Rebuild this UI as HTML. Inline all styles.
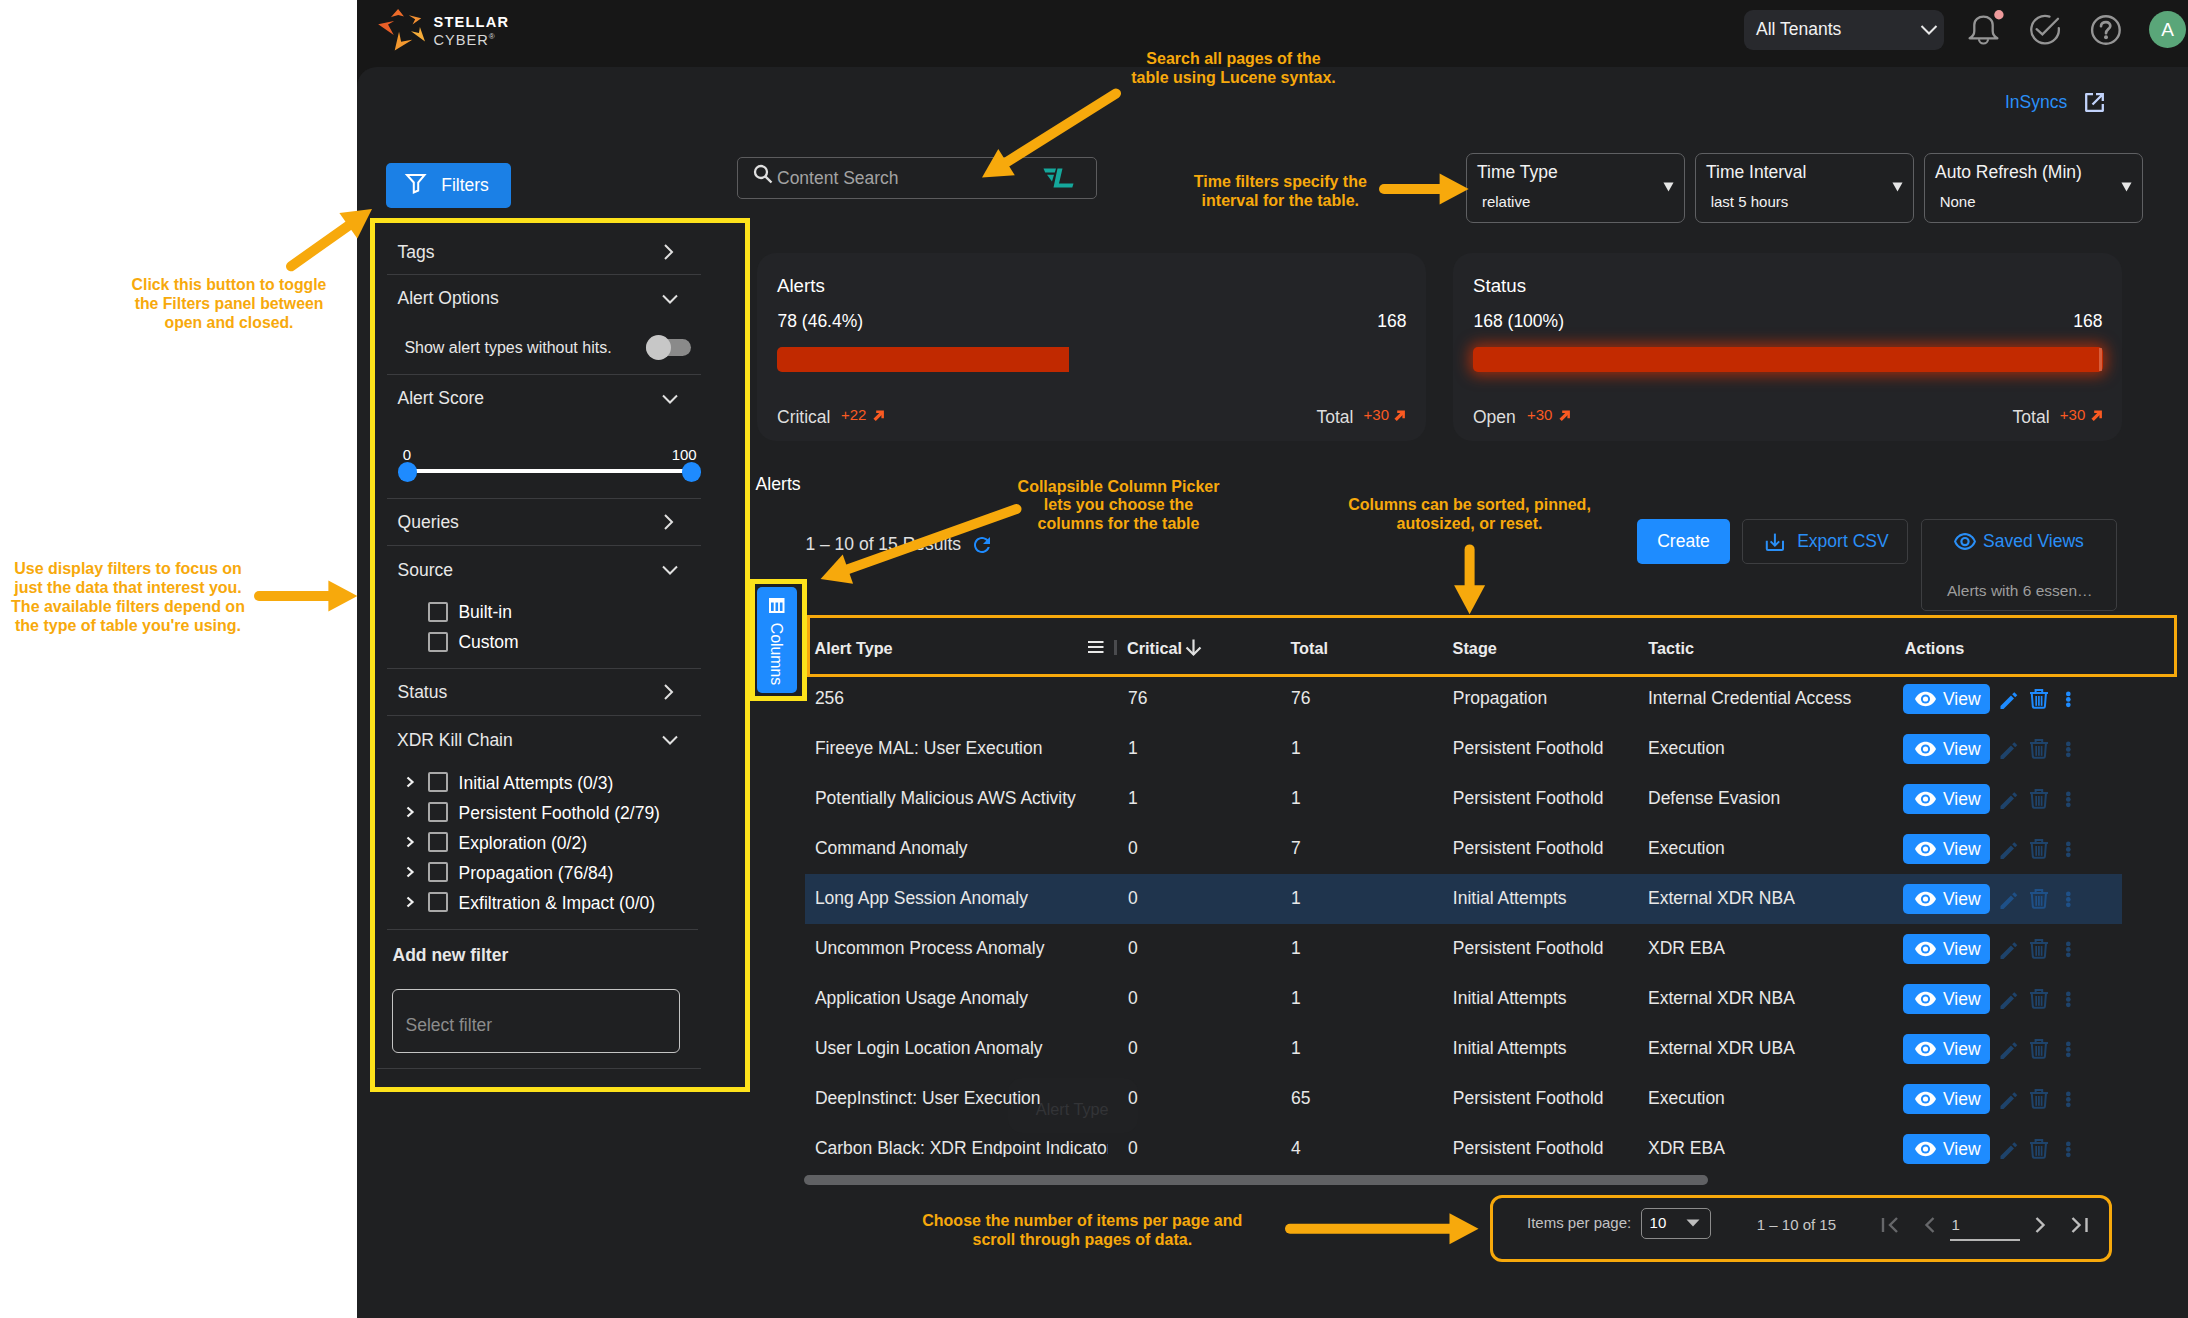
<!DOCTYPE html>
<html><head><meta charset="utf-8"><style>
html,body{margin:0;padding:0;}
body{width:2188px;height:1318px;position:relative;overflow:hidden;background:#fff;font-family:"Liberation Sans",sans-serif;}
.t{position:absolute;white-space:nowrap;}
.r{position:absolute;}
.s{position:absolute;overflow:visible;}
</style></head><body>
<div class="r" style="left:0px;top:0px;width:357px;height:1318px;background:#ffffff;"></div>
<div class="r" style="left:357px;top:0px;width:1831px;height:67px;background:#171717;"></div>
<div class="r" style="left:357px;top:67px;width:1831px;height:1251px;background:#171717;"></div>
<div class="r" style="left:357px;top:67px;width:1831px;height:1251px;background:#1f2022;border-top-left-radius:20px;"></div>
<svg class="s" style="left:357px;top:0px;" width="80" height="60" viewBox="0 0 80 60"><polygon points="41.09,8.98 33.88,17.14 35.07,16.79 41.28,14.94 46.06,16.15 46.97,16.38" fill="#ee6c2a"/><polygon points="64.23,18.28 51.90,15.24 52.90,15.88 58.16,19.23 55.93,23.69 55.51,24.54" fill="#f39032"/><polygon points="68.02,41.42 62.90,27.00 62.75,27.94 61.95,32.88 55.26,31.45 53.99,31.18" fill="#f6ad3a"/><polygon points="37.68,50.52 42.04,31.75 42.37,33.35 44.12,41.80 53.53,40.05 55.32,39.71" fill="#f3982f"/><polygon points="21.17,24.35 36.92,21.12 35.98,21.67 31.04,24.54 35.82,33.30 36.73,34.97" fill="#e95f28"/></svg>
<div class="t" style="top:14.84px;font-size:14.6px;line-height:14.6px;color:#ffffff;font-weight:700;letter-spacing:1.2px;left:433.50px;">STELLAR</div>
<div class="t" style="top:32.84px;font-size:14.6px;line-height:14.6px;color:#d8d8d8;letter-spacing:1.0px;left:433.50px;">CYBER<span style="font-size:8px;position:relative;top:-6px;margin-left:0px">®</span></div>
<div class="r" style="left:1744px;top:10px;width:200px;height:40px;background:#28292d;border-radius:9px;"></div>
<div class="t" style="top:21.39px;font-size:17.5px;line-height:17.5px;color:#f2f2f2;left:1756.00px;">All Tenants</div>
<svg class="s" style="left:1918px;top:22px;" width="22" height="16" viewBox="0 0 22 16"><polyline points="3.5,4 11,11.5 18.5,4" fill="none" stroke="#e8e8e8" stroke-width="2"/></svg>
<svg class="s" style="left:1966px;top:12px;" width="36" height="36" viewBox="0 0 36 36"><path d="M3.6 26.3 C6.6 24.6 8.3 22.5 8.3 19 V13 C8.3 7.8 12.4 4.7 17.5 4.7 C22.6 4.7 26.7 7.8 26.7 13 V19 C26.7 22.5 28.4 24.6 31.4 26.3 Z" fill="none" stroke="#959595" stroke-width="2.3" stroke-linejoin="round"/><path d="M13 27.2 A4.5 4.3 0 0 0 22 27.2" fill="none" stroke="#959595" stroke-width="2.2"/></svg>
<svg class="s" style="left:1992px;top:8px;" width="14" height="14" viewBox="0 0 14 14"><circle cx="6.9" cy="6.7" r="4.7" fill="#ee9a9b"/></svg>
<svg class="s" style="left:2028px;top:13px;" width="34" height="34" viewBox="0 0 34 34"><path d="M21.5 3.6 A13.8 13.8 0 1 0 30.8 15.2" fill="none" stroke="#959595" stroke-width="2.3" stroke-linecap="round"/><polyline points="8.6,16.2 14.4,21.4 30,5.8" fill="none" stroke="#959595" stroke-width="2.3" stroke-linecap="round"/></svg>
<svg class="s" style="left:2089px;top:13px;" width="34" height="34" viewBox="0 0 34 34"><circle cx="16.9" cy="17" r="13.8" fill="none" stroke="#959595" stroke-width="2.4"/><path d="M12 13.2 C12 10.6 14.2 9.1 17 9.1 C19.6 9.1 21.3 10.8 21.3 13 C21.3 15.8 17 16.6 17 20.2" fill="none" stroke="#959595" stroke-width="2.7" stroke-linecap="round"/><circle cx="17" cy="24.2" r="2" fill="#959595"/></svg>
<div class="r" style="left:2149px;top:11px;width:37px;height:37px;background:#5aa679;border-radius:19px;"></div>
<div class="t" style="top:19.72px;font-size:19px;line-height:19px;color:#ffffff;left:1667.50px;width:1000px;text-align:center;">A</div>
<div class="t" style="top:94.39px;font-size:17.5px;line-height:17.5px;color:#2a8ff7;left:2005.00px;">InSyncs</div>
<svg class="s" style="left:2083px;top:91px;" width="23" height="23" viewBox="0 0 23 23"><path d="M10 3.2 H3.2 V19.8 H19.8 V13" fill="none" stroke="#c2d3fb" stroke-width="2.3" stroke-linejoin="round"/><path d="M9.5 13.5 L19 4 M13 3.2 H19.8 V10" fill="none" stroke="#c2d3fb" stroke-width="2.3"/></svg>
<div class="r" style="left:386px;top:163px;width:125px;height:45px;background:#1b80e6;border-radius:5px;"></div>
<svg class="s" style="left:404px;top:172px;" width="24" height="23" viewBox="0 0 24 23"><path d="M3 3 H20.5 L14.2 10.5 V18.5 L9.8 20.5 V10.5 Z" fill="none" stroke="#fff" stroke-width="2" stroke-linejoin="miter"/></svg>
<div class="t" style="top:177.29px;font-size:17.5px;line-height:17.5px;color:#ffffff;left:441.20px;">Filters</div>
<div class="r" style="left:737px;top:157px;width:360px;height:42px;border:1px solid #5c5c5e;box-sizing:border-box;border-radius:5px;"></div>
<svg class="s" style="left:751px;top:163px;" width="24" height="24" viewBox="0 0 24 24"><circle cx="10" cy="9" r="6" fill="none" stroke="#e0e0e0" stroke-width="2.3"/><line x1="14.3" y1="13.3" x2="20.5" y2="19.5" stroke="#e0e0e0" stroke-width="2.4"/></svg>
<div class="t" style="top:169.99px;font-size:17.5px;line-height:17.5px;color:#a3a3a3;left:777.00px;">Content Search</div>
<svg class="s" style="left:1042px;top:167px;" width="36" height="22" viewBox="0 0 36 22"><polygon points="1.5,1.5 14,1.5 12.8,5.5 3.2,5.5" fill="#15a89c"/><polygon points="5,7.8 12,7.8 10,14.5 " fill="#15a89c"/><polygon points="15.5,1.5 20.5,1.5 17,16.5 31.5,16.5 30.3,20.5 11.5,20.5" fill="#15a89c"/></svg>
<div class="r" style="left:1466px;top:153px;width:219px;height:70px;border:1.5px solid #5f6063;box-sizing:border-box;border-radius:7px;"></div>
<div class="t" style="top:164.09px;font-size:17.5px;line-height:17.5px;color:#f2f2f2;left:1477.00px;">Time Type</div>
<div class="t" style="top:193.80px;font-size:15px;line-height:15px;color:#f2f2f2;left:1481.90px;">relative</div>
<svg class="s" style="left:1663px;top:182px;" width="12" height="10" viewBox="0 0 12 10"><polygon points="0.5,0.5 10.5,0.5 5.5,9.5" fill="#e6e6e6"/></svg>
<div class="r" style="left:1695px;top:153px;width:219px;height:70px;border:1.5px solid #5f6063;box-sizing:border-box;border-radius:7px;"></div>
<div class="t" style="top:164.09px;font-size:17.5px;line-height:17.5px;color:#f2f2f2;left:1706.00px;">Time Interval</div>
<div class="t" style="top:193.80px;font-size:15px;line-height:15px;color:#f2f2f2;left:1710.70px;">last 5 hours</div>
<svg class="s" style="left:1892px;top:182px;" width="12" height="10" viewBox="0 0 12 10"><polygon points="0.5,0.5 10.5,0.5 5.5,9.5" fill="#e6e6e6"/></svg>
<div class="r" style="left:1924px;top:153px;width:219px;height:70px;border:1.5px solid #5f6063;box-sizing:border-box;border-radius:7px;"></div>
<div class="t" style="top:164.09px;font-size:17.5px;line-height:17.5px;color:#f2f2f2;left:1935.00px;">Auto Refresh (Min)</div>
<div class="t" style="top:193.80px;font-size:15px;line-height:15px;color:#f2f2f2;left:1939.70px;">None</div>
<svg class="s" style="left:2121px;top:182px;" width="12" height="10" viewBox="0 0 12 10"><polygon points="0.5,0.5 10.5,0.5 5.5,9.5" fill="#e6e6e6"/></svg>
<div class="r" style="left:757px;top:253px;width:669px;height:188px;background:#232427;border-radius:19px;"></div>
<div class="t" style="top:276.97px;font-size:18.7px;line-height:18.7px;color:#ffffff;left:777.00px;">Alerts</div>
<div class="t" style="top:312.99px;font-size:17.5px;line-height:17.5px;color:#ffffff;left:777.50px;">78 (46.4%)</div>
<div class="t" style="top:312.99px;font-size:17.5px;line-height:17.5px;color:#ffffff;right:781.50px;">168</div>
<div class="r" style="left:777px;top:347px;width:292px;height:25px;background:#c12900;border-radius:5px 0 0 5px;"></div>
<div class="t" style="top:408.99px;font-size:17.5px;line-height:17.5px;color:#dedede;left:777.00px;">Critical</div>
<div class="t" style="top:407.30px;font-size:15px;line-height:15px;color:#fa5a22;left:840.90px;">+22</div>
<svg class="s" style="left:872.6999999999999px;top:409.6px;" width="12" height="12" viewBox="0 0 12 12"><polygon points="3.2,0.6 10.9,0.6 10.9,8.3 8.4,8.3 8.4,3.1 3.2,3.1" fill="#fa5a22"/><line x1="1.6" y1="9.9" x2="9.4" y2="2.1" stroke="#fa5a22" stroke-width="3.2"/></svg>
<div class="t" style="top:408.99px;font-size:17.5px;line-height:17.5px;color:#dedede;left:1316.50px;">Total</div>
<div class="t" style="top:407.30px;font-size:15px;line-height:15px;color:#fa5a22;left:1363.60px;">+30</div>
<svg class="s" style="left:1394.3px;top:409.6px;" width="12" height="12" viewBox="0 0 12 12"><polygon points="3.2,0.6 10.9,0.6 10.9,8.3 8.4,8.3 8.4,3.1 3.2,3.1" fill="#fa5a22"/><line x1="1.6" y1="9.9" x2="9.4" y2="2.1" stroke="#fa5a22" stroke-width="3.2"/></svg>
<div class="r" style="left:1453px;top:253px;width:669px;height:188px;background:#232427;border-radius:19px;"></div>
<div class="t" style="top:276.97px;font-size:18.7px;line-height:18.7px;color:#ffffff;left:1473.00px;">Status</div>
<div class="t" style="top:312.99px;font-size:17.5px;line-height:17.5px;color:#ffffff;left:1473.50px;">168 (100%)</div>
<div class="t" style="top:312.99px;font-size:17.5px;line-height:17.5px;color:#ffffff;right:85.50px;">168</div>
<div class="r" style="left:1473px;top:347px;width:630px;height:25px;background:#c32a00;border-radius:5px;box-shadow:0 0 14px 4px rgba(225,50,0,0.6);"></div>
<div class="r" style="left:2099px;top:348px;width:3px;height:23px;background:rgba(255,190,170,0.35);"></div>
<div class="t" style="top:408.99px;font-size:17.5px;line-height:17.5px;color:#dedede;left:1473.00px;">Open</div>
<div class="t" style="top:407.30px;font-size:15px;line-height:15px;color:#fa5a22;left:1526.90px;">+30</div>
<svg class="s" style="left:1558.8999999999999px;top:409.6px;" width="12" height="12" viewBox="0 0 12 12"><polygon points="3.2,0.6 10.9,0.6 10.9,8.3 8.4,8.3 8.4,3.1 3.2,3.1" fill="#fa5a22"/><line x1="1.6" y1="9.9" x2="9.4" y2="2.1" stroke="#fa5a22" stroke-width="3.2"/></svg>
<div class="t" style="top:408.99px;font-size:17.5px;line-height:17.5px;color:#dedede;left:2012.60px;">Total</div>
<div class="t" style="top:407.30px;font-size:15px;line-height:15px;color:#fa5a22;left:2059.80px;">+30</div>
<svg class="s" style="left:2091.3px;top:409.6px;" width="12" height="12" viewBox="0 0 12 12"><polygon points="3.2,0.6 10.9,0.6 10.9,8.3 8.4,8.3 8.4,3.1 3.2,3.1" fill="#fa5a22"/><line x1="1.6" y1="9.9" x2="9.4" y2="2.1" stroke="#fa5a22" stroke-width="3.2"/></svg>
<div class="t" style="top:243.79px;font-size:17.5px;line-height:17.5px;color:#e8e8e8;left:397.50px;">Tags</div>
<svg class="s" style="left:660px;top:242.5px;" width="18" height="18" viewBox="0 0 18 18"><polyline points="5,2 12,9 5,16" fill="none" stroke="#e0e0e0" stroke-width="2"/></svg>
<div class="r" style="left:387px;top:274px;width:314px;height:1px;background:#3b3c3f;"></div>
<div class="t" style="top:290.39px;font-size:17.5px;line-height:17.5px;color:#e8e8e8;left:397.50px;">Alert Options</div>
<svg class="s" style="left:660px;top:289.5px;" width="20" height="18" viewBox="0 0 20 18"><polyline points="3,5.5 10,12.5 17,5.5" fill="none" stroke="#e0e0e0" stroke-width="2"/></svg>
<div class="t" style="top:340.06px;font-size:16px;line-height:16px;color:#e8e8e8;left:404.40px;">Show alert types without hits.</div>
<div class="r" style="left:646px;top:339px;width:45px;height:17px;background:#8a8a8a;border-radius:9px;"></div>
<div class="r" style="left:646px;top:335px;width:25px;height:25px;background:#c7c7c7;border-radius:13px;"></div>
<div class="r" style="left:387px;top:374px;width:314px;height:1px;background:#3b3c3f;"></div>
<div class="t" style="top:389.99px;font-size:17.5px;line-height:17.5px;color:#e8e8e8;left:397.50px;">Alert Score</div>
<svg class="s" style="left:660px;top:389.5px;" width="20" height="18" viewBox="0 0 20 18"><polyline points="3,5.5 10,12.5 17,5.5" fill="none" stroke="#e0e0e0" stroke-width="2"/></svg>
<div class="t" style="top:447.30px;font-size:15px;line-height:15px;color:#ffffff;left:402.80px;">0</div>
<div class="t" style="top:447.30px;font-size:15px;line-height:15px;color:#ffffff;right:1491.30px;">100</div>
<div class="r" style="left:407px;top:469px;width:284px;height:4px;background:#ffffff;"></div>
<div class="r" style="left:397.5px;top:462px;width:19.5px;height:19.5px;background:#1e8bff;border-radius:10px;"></div>
<div class="r" style="left:681.5px;top:462px;width:19.5px;height:19.5px;background:#1e8bff;border-radius:10px;"></div>
<div class="r" style="left:387px;top:498px;width:314px;height:1px;background:#3b3c3f;"></div>
<div class="t" style="top:514.39px;font-size:17.5px;line-height:17.5px;color:#e8e8e8;left:397.60px;">Queries</div>
<svg class="s" style="left:660px;top:512.5px;" width="18" height="18" viewBox="0 0 18 18"><polyline points="5,2 12,9 5,16" fill="none" stroke="#e0e0e0" stroke-width="2"/></svg>
<div class="r" style="left:387px;top:545px;width:314px;height:1px;background:#3b3c3f;"></div>
<div class="t" style="top:561.79px;font-size:17.5px;line-height:17.5px;color:#e8e8e8;left:397.60px;">Source</div>
<svg class="s" style="left:660px;top:560.5px;" width="20" height="18" viewBox="0 0 20 18"><polyline points="3,5.5 10,12.5 17,5.5" fill="none" stroke="#e0e0e0" stroke-width="2"/></svg>
<div class="r" style="left:428px;top:602px;width:20px;height:20px;border:2px solid #a9a9a9;box-sizing:border-box;border-radius:2px;"></div>
<div class="t" style="top:604.39px;font-size:17.5px;line-height:17.5px;color:#ffffff;left:458.40px;">Built-in</div>
<div class="r" style="left:428px;top:632px;width:20px;height:20px;border:2px solid #a9a9a9;box-sizing:border-box;border-radius:2px;"></div>
<div class="t" style="top:633.99px;font-size:17.5px;line-height:17.5px;color:#ffffff;left:458.40px;">Custom</div>
<div class="r" style="left:387px;top:668px;width:314px;height:1px;background:#3b3c3f;"></div>
<div class="t" style="top:684.09px;font-size:17.5px;line-height:17.5px;color:#e8e8e8;left:397.60px;">Status</div>
<svg class="s" style="left:660px;top:682.5px;" width="18" height="18" viewBox="0 0 18 18"><polyline points="5,2 12,9 5,16" fill="none" stroke="#e0e0e0" stroke-width="2"/></svg>
<div class="r" style="left:387px;top:715px;width:314px;height:1px;background:#3b3c3f;"></div>
<div class="t" style="top:731.69px;font-size:17.5px;line-height:17.5px;color:#e8e8e8;left:397.00px;">XDR Kill Chain</div>
<svg class="s" style="left:660px;top:730.5px;" width="20" height="18" viewBox="0 0 20 18"><polyline points="3,5.5 10,12.5 17,5.5" fill="none" stroke="#e0e0e0" stroke-width="2"/></svg>
<svg class="s" style="left:403px;top:775px;" width="14" height="14" viewBox="0 0 14 14"><polyline points="4.5,2.5 9.5,7 4.5,11.5" fill="none" stroke="#f0f0f0" stroke-width="2.2"/></svg>
<div class="r" style="left:428px;top:772px;width:20px;height:20px;border:2px solid #a9a9a9;box-sizing:border-box;border-radius:2px;"></div>
<div class="t" style="top:774.79px;font-size:17.5px;line-height:17.5px;color:#ffffff;left:458.60px;">Initial Attempts (0/3)</div>
<svg class="s" style="left:403px;top:805px;" width="14" height="14" viewBox="0 0 14 14"><polyline points="4.5,2.5 9.5,7 4.5,11.5" fill="none" stroke="#f0f0f0" stroke-width="2.2"/></svg>
<div class="r" style="left:428px;top:802px;width:20px;height:20px;border:2px solid #a9a9a9;box-sizing:border-box;border-radius:2px;"></div>
<div class="t" style="top:804.79px;font-size:17.5px;line-height:17.5px;color:#ffffff;left:458.60px;">Persistent Foothold (2/79)</div>
<svg class="s" style="left:403px;top:835px;" width="14" height="14" viewBox="0 0 14 14"><polyline points="4.5,2.5 9.5,7 4.5,11.5" fill="none" stroke="#f0f0f0" stroke-width="2.2"/></svg>
<div class="r" style="left:428px;top:832px;width:20px;height:20px;border:2px solid #a9a9a9;box-sizing:border-box;border-radius:2px;"></div>
<div class="t" style="top:834.79px;font-size:17.5px;line-height:17.5px;color:#ffffff;left:458.60px;">Exploration (0/2)</div>
<svg class="s" style="left:403px;top:865px;" width="14" height="14" viewBox="0 0 14 14"><polyline points="4.5,2.5 9.5,7 4.5,11.5" fill="none" stroke="#f0f0f0" stroke-width="2.2"/></svg>
<div class="r" style="left:428px;top:862px;width:20px;height:20px;border:2px solid #a9a9a9;box-sizing:border-box;border-radius:2px;"></div>
<div class="t" style="top:864.79px;font-size:17.5px;line-height:17.5px;color:#ffffff;left:458.60px;">Propagation (76/84)</div>
<svg class="s" style="left:403px;top:895px;" width="14" height="14" viewBox="0 0 14 14"><polyline points="4.5,2.5 9.5,7 4.5,11.5" fill="none" stroke="#f0f0f0" stroke-width="2.2"/></svg>
<div class="r" style="left:428px;top:892px;width:20px;height:20px;border:2px solid #a9a9a9;box-sizing:border-box;border-radius:2px;"></div>
<div class="t" style="top:894.79px;font-size:17.5px;line-height:17.5px;color:#ffffff;left:458.60px;">Exfiltration &amp; Impact (0/0)</div>
<div class="r" style="left:387px;top:929px;width:311px;height:1px;background:#3b3c3f;"></div>
<div class="t" style="top:947.19px;font-size:17.5px;line-height:17.5px;color:#e8e8e8;font-weight:700;left:392.50px;">Add new filter</div>
<div class="r" style="left:392px;top:989px;width:288px;height:64px;border:1px solid #c4c4c4;box-sizing:border-box;border-radius:6px;"></div>
<div class="t" style="top:1016.99px;font-size:17.5px;line-height:17.5px;color:#8c8c8c;left:405.50px;">Select filter</div>
<div class="r" style="left:377px;top:1068px;width:324px;height:1px;background:#3b3c3f;"></div>
<div class="r" style="left:370px;top:218px;width:380px;height:874px;border:5px solid #fde21b;box-sizing:border-box;"></div>
<div class="r" style="left:750px;top:579px;width:57px;height:122px;border:5px solid #fde21b;box-sizing:border-box;"></div>
<div class="r" style="left:757px;top:587px;width:40px;height:106px;background:#1e8bff;border-radius:5px;"></div>
<svg class="s" style="left:768px;top:597px;" width="18" height="17" viewBox="0 0 18 17"><rect x="2" y="2" width="13.5" height="13" fill="none" stroke="#fff" stroke-width="2"/><rect x="2" y="2" width="13.5" height="3.5" fill="#fff"/><line x1="6.6" y1="4" x2="6.6" y2="15" stroke="#fff" stroke-width="1.8"/><line x1="11" y1="4" x2="11" y2="15" stroke="#fff" stroke-width="1.8"/></svg>
<div class="t" style="left:744px;top:644px;width:64px;height:20px;font-size:15.8px;line-height:20px;color:#fff;text-align:center;transform:rotate(90deg);">Columns</div>
<div class="t" style="top:476.02px;font-size:17.7px;line-height:17.7px;color:#ffffff;left:755.50px;">Alerts</div>
<div class="t" style="top:536.19px;font-size:17.5px;line-height:17.5px;color:#e0e0e0;left:805.40px;">1 – 10 of 15 Results</div>
<svg class="s" style="left:970px;top:532.6px;" width="24" height="24" viewBox="0 0 24 24"><path d="M17.65 6.35C16.2 4.9 14.21 4 12 4c-4.42 0-7.99 3.58-7.99 8s3.57 8 7.99 8c3.73 0 6.84-2.55 7.73-6h-2.08c-.82 2.33-3.04 4-5.65 4-3.310 0-6-2.69-6-6s2.69-6 6-6c1.66 0 3.14.69 4.220 1.780L13 11h7V4l-2.35 2.35z" fill="#1e8bff"/></svg>
<div class="r" style="left:1637px;top:519px;width:93px;height:45px;background:#1e8cff;border-radius:5px;"></div>
<div class="t" style="top:533.19px;font-size:17.5px;line-height:17.5px;color:#ffffff;left:1183.50px;width:1000px;text-align:center;">Create</div>
<div class="r" style="left:1742px;top:519px;width:166px;height:45px;border:1px solid #3d3e41;box-sizing:border-box;border-radius:5px;"></div>
<svg class="s" style="left:1764px;top:532px;" width="22" height="22" viewBox="0 0 22 22"><path d="M2.8 8.8 V17 Q2.8 18.1 3.9 18.1 H17.9 Q19 18.1 19 17 V8.8" fill="none" stroke="#2a8ff7" stroke-width="2"/><line x1="10.9" y1="1.6" x2="10.9" y2="13" stroke="#2a8ff7" stroke-width="2"/><polyline points="6.6,9.4 10.9,13.6 15.2,9.4" fill="none" stroke="#2a8ff7" stroke-width="2"/></svg>
<div class="t" style="top:533.19px;font-size:17.5px;line-height:17.5px;color:#2a8ff7;left:1797.20px;">Export CSV</div>
<div class="r" style="left:1921px;top:519px;width:196px;height:92px;border:1px solid #3d3e41;box-sizing:border-box;border-radius:5px;"></div>
<svg class="s" style="left:1953px;top:528.3px;" width="24" height="24" viewBox="0 0 24 24"><g transform="scale(1,1.13)"><path d="M12 6.5c3.79 0 7.170 2.13 8.82 5.5-1.65 3.37-5.02 5.5-8.82 5.5S4.830 15.37 3.180 12C4.830 8.630 8.210 6.5 12 6.5m0-2C7 4.5 2.730 7.610 1 12c1.73 4.39 6 7.5 11 7.5s9.27-3.11 11-7.5c-1.73-4.39-6-7.5-11-7.5z" fill="#2a8ff7"/></g><circle cx="12" cy="13.6" r="3.6" fill="none" stroke="#2a8ff7" stroke-width="2.2"/></svg>
<div class="t" style="top:533.19px;font-size:17.5px;line-height:17.5px;color:#2a8ff7;left:1983.00px;">Saved Views</div>
<div class="t" style="top:582.58px;font-size:15.5px;line-height:15.5px;color:#9d9d9d;left:1947.00px;">Alerts with 6 essen…</div>
<div class="r" style="left:807px;top:615px;width:1370px;height:62px;border:3px solid #f7a90c;box-sizing:border-box;"></div>
<div class="t" style="top:640.14px;font-size:16.25px;line-height:16.25px;color:#ececec;font-weight:700;left:814.40px;">Alert Type</div>
<svg class="s" style="left:1086px;top:638px;" width="20" height="18" viewBox="0 0 20 18"><line x1="2" y1="4" x2="17.5" y2="4" stroke="#e8e8e8" stroke-width="2"/><line x1="2" y1="9" x2="17.5" y2="9" stroke="#e8e8e8" stroke-width="2"/><line x1="2" y1="14" x2="17.5" y2="14" stroke="#e8e8e8" stroke-width="2"/></svg>
<div class="r" style="left:1114px;top:640px;width:3px;height:15px;background:#4a4b4e;"></div>
<div class="t" style="top:640.14px;font-size:16.25px;line-height:16.25px;color:#ececec;font-weight:700;left:1126.90px;">Critical</div>
<svg class="s" style="left:1184px;top:638px;" width="20" height="19" viewBox="0 0 20 19"><line x1="9.5" y1="1.5" x2="9.5" y2="16.5" stroke="#e0e0e0" stroke-width="2.2"/><polyline points="2.5,9.5 9.5,16.5 16.5,9.5" fill="none" stroke="#e0e0e0" stroke-width="2.2"/></svg>
<div class="t" style="top:640.14px;font-size:16.25px;line-height:16.25px;color:#ececec;font-weight:700;left:1290.40px;">Total</div>
<div class="t" style="top:640.14px;font-size:16.25px;line-height:16.25px;color:#ececec;font-weight:700;left:1452.60px;">Stage</div>
<div class="t" style="top:640.14px;font-size:16.25px;line-height:16.25px;color:#ececec;font-weight:700;left:1648.20px;">Tactic</div>
<div class="t" style="top:640.14px;font-size:16.25px;line-height:16.25px;color:#ececec;font-weight:700;left:1904.70px;">Actions</div>
<div class="r" style="left:805px;top:874px;width:1317px;height:50px;background:#1f344d;"></div>
<div class="r" style="left:1008px;top:1078px;width:130px;height:55px;background:#202123;border-radius:14px;"></div>
<div class="t" style="top:1101.04px;font-size:16.25px;line-height:16.25px;color:#333437;left:1035.80px;">Alert Type</div>
<div class="t" style="top:689.69px;font-size:17.5px;line-height:17.5px;color:#e8e8e8;left:814.90px;">256</div>
<div class="t" style="top:689.69px;font-size:17.5px;line-height:17.5px;color:#e8e8e8;left:1128.00px;">76</div>
<div class="t" style="top:689.69px;font-size:17.5px;line-height:17.5px;color:#e8e8e8;left:1291.00px;">76</div>
<div class="t" style="top:689.69px;font-size:17.5px;line-height:17.5px;color:#e8e8e8;left:1452.80px;">Propagation</div>
<div class="t" style="top:689.69px;font-size:17.5px;line-height:17.5px;color:#e8e8e8;left:1648.00px;">Internal Credential Access</div>
<div class="r" style="left:1903px;top:684px;width:87px;height:30px;background:#1e8cff;border-radius:5px;"></div>
<svg class="s" style="left:1914px;top:691px;" width="24" height="16" viewBox="0 0 24 16"><path d="M1 8 C3.5 3 7.5 0.8 11.5 0.8 C15.5 0.8 19.5 3 22 8 C19.5 13 15.5 15.2 11.5 15.2 C7.5 15.2 3.5 13 1 8 Z" fill="#fff"/><circle cx="11.5" cy="8" r="4.6" fill="#1e8cff"/><circle cx="11.5" cy="8" r="2.6" fill="#fff"/></svg>
<div class="t" style="top:690.89px;font-size:17.5px;line-height:17.5px;color:#ffffff;left:1943.00px;">View</div>
<svg class="s" style="left:1999px;top:690px;" width="21" height="20" viewBox="0 0 21 20"><path d="M1.5 16 L1.5 19 L4.5 19 L15 8.5 L12 5.5 Z" fill="#1e8bff"/><path d="M13.2 4.3 L15.3 2.2 L18.3 5.2 L16.2 7.3 Z" fill="#1e8bff"/></svg>
<svg class="s" style="left:2029px;top:688px;" width="20" height="22" viewBox="0 0 20 22"><path d="M2.8 5.8 L3.8 18.5 Q4 19.8 5.3 19.8 H14.5 Q15.8 19.8 15.9 18.5 L16.9 5.8" fill="none" stroke="#1e8bff" stroke-width="2"/><line x1="1" y1="5" x2="19" y2="5" stroke="#1e8bff" stroke-width="2"/><path d="M6.6 4.5 V2 H13.2 V4.5" fill="none" stroke="#1e8bff" stroke-width="2"/><line x1="7.2" y1="8" x2="7.2" y2="17.8" stroke="#1e8bff" stroke-width="1.7"/><line x1="9.9" y1="8" x2="9.9" y2="17.8" stroke="#1e8bff" stroke-width="1.7"/><line x1="12.6" y1="8" x2="12.6" y2="17.8" stroke="#1e8bff" stroke-width="1.7"/></svg>
<svg class="s" style="left:2064px;top:690px;" width="10" height="19" viewBox="0 0 10 19"><circle cx="4.3" cy="3.9" r="2.35" fill="#1e8bff"/><circle cx="4.3" cy="9.4" r="2.35" fill="#1e8bff"/><circle cx="4.3" cy="14.8" r="2.35" fill="#1e8bff"/></svg>
<div class="t" style="top:739.69px;font-size:17.5px;line-height:17.5px;color:#e8e8e8;left:814.90px;">Fireeye MAL: User Execution</div>
<div class="t" style="top:739.69px;font-size:17.5px;line-height:17.5px;color:#e8e8e8;left:1128.00px;">1</div>
<div class="t" style="top:739.69px;font-size:17.5px;line-height:17.5px;color:#e8e8e8;left:1291.00px;">1</div>
<div class="t" style="top:739.69px;font-size:17.5px;line-height:17.5px;color:#e8e8e8;left:1452.80px;">Persistent Foothold</div>
<div class="t" style="top:739.69px;font-size:17.5px;line-height:17.5px;color:#e8e8e8;left:1648.00px;">Execution</div>
<div class="r" style="left:1903px;top:734px;width:87px;height:30px;background:#1e8cff;border-radius:5px;"></div>
<svg class="s" style="left:1914px;top:741px;" width="24" height="16" viewBox="0 0 24 16"><path d="M1 8 C3.5 3 7.5 0.8 11.5 0.8 C15.5 0.8 19.5 3 22 8 C19.5 13 15.5 15.2 11.5 15.2 C7.5 15.2 3.5 13 1 8 Z" fill="#fff"/><circle cx="11.5" cy="8" r="4.6" fill="#1e8cff"/><circle cx="11.5" cy="8" r="2.6" fill="#fff"/></svg>
<div class="t" style="top:740.89px;font-size:17.5px;line-height:17.5px;color:#ffffff;left:1943.00px;">View</div>
<svg class="s" style="left:1999px;top:740px;opacity:0.33;" width="21" height="20" viewBox="0 0 21 20"><path d="M1.5 16 L1.5 19 L4.5 19 L15 8.5 L12 5.5 Z" fill="#1e8bff"/><path d="M13.2 4.3 L15.3 2.2 L18.3 5.2 L16.2 7.3 Z" fill="#1e8bff"/></svg>
<svg class="s" style="left:2029px;top:738px;opacity:0.33;" width="20" height="22" viewBox="0 0 20 22"><path d="M2.8 5.8 L3.8 18.5 Q4 19.8 5.3 19.8 H14.5 Q15.8 19.8 15.9 18.5 L16.9 5.8" fill="none" stroke="#1e8bff" stroke-width="2"/><line x1="1" y1="5" x2="19" y2="5" stroke="#1e8bff" stroke-width="2"/><path d="M6.6 4.5 V2 H13.2 V4.5" fill="none" stroke="#1e8bff" stroke-width="2"/><line x1="7.2" y1="8" x2="7.2" y2="17.8" stroke="#1e8bff" stroke-width="1.7"/><line x1="9.9" y1="8" x2="9.9" y2="17.8" stroke="#1e8bff" stroke-width="1.7"/><line x1="12.6" y1="8" x2="12.6" y2="17.8" stroke="#1e8bff" stroke-width="1.7"/></svg>
<svg class="s" style="left:2064px;top:740px;opacity:0.33;" width="10" height="19" viewBox="0 0 10 19"><circle cx="4.3" cy="3.9" r="2.35" fill="#1e8bff"/><circle cx="4.3" cy="9.4" r="2.35" fill="#1e8bff"/><circle cx="4.3" cy="14.8" r="2.35" fill="#1e8bff"/></svg>
<div class="t" style="top:789.69px;font-size:17.5px;line-height:17.5px;color:#e8e8e8;left:814.90px;">Potentially Malicious AWS Activity</div>
<div class="t" style="top:789.69px;font-size:17.5px;line-height:17.5px;color:#e8e8e8;left:1128.00px;">1</div>
<div class="t" style="top:789.69px;font-size:17.5px;line-height:17.5px;color:#e8e8e8;left:1291.00px;">1</div>
<div class="t" style="top:789.69px;font-size:17.5px;line-height:17.5px;color:#e8e8e8;left:1452.80px;">Persistent Foothold</div>
<div class="t" style="top:789.69px;font-size:17.5px;line-height:17.5px;color:#e8e8e8;left:1648.00px;">Defense Evasion</div>
<div class="r" style="left:1903px;top:784px;width:87px;height:30px;background:#1e8cff;border-radius:5px;"></div>
<svg class="s" style="left:1914px;top:791px;" width="24" height="16" viewBox="0 0 24 16"><path d="M1 8 C3.5 3 7.5 0.8 11.5 0.8 C15.5 0.8 19.5 3 22 8 C19.5 13 15.5 15.2 11.5 15.2 C7.5 15.2 3.5 13 1 8 Z" fill="#fff"/><circle cx="11.5" cy="8" r="4.6" fill="#1e8cff"/><circle cx="11.5" cy="8" r="2.6" fill="#fff"/></svg>
<div class="t" style="top:790.89px;font-size:17.5px;line-height:17.5px;color:#ffffff;left:1943.00px;">View</div>
<svg class="s" style="left:1999px;top:790px;opacity:0.33;" width="21" height="20" viewBox="0 0 21 20"><path d="M1.5 16 L1.5 19 L4.5 19 L15 8.5 L12 5.5 Z" fill="#1e8bff"/><path d="M13.2 4.3 L15.3 2.2 L18.3 5.2 L16.2 7.3 Z" fill="#1e8bff"/></svg>
<svg class="s" style="left:2029px;top:788px;opacity:0.33;" width="20" height="22" viewBox="0 0 20 22"><path d="M2.8 5.8 L3.8 18.5 Q4 19.8 5.3 19.8 H14.5 Q15.8 19.8 15.9 18.5 L16.9 5.8" fill="none" stroke="#1e8bff" stroke-width="2"/><line x1="1" y1="5" x2="19" y2="5" stroke="#1e8bff" stroke-width="2"/><path d="M6.6 4.5 V2 H13.2 V4.5" fill="none" stroke="#1e8bff" stroke-width="2"/><line x1="7.2" y1="8" x2="7.2" y2="17.8" stroke="#1e8bff" stroke-width="1.7"/><line x1="9.9" y1="8" x2="9.9" y2="17.8" stroke="#1e8bff" stroke-width="1.7"/><line x1="12.6" y1="8" x2="12.6" y2="17.8" stroke="#1e8bff" stroke-width="1.7"/></svg>
<svg class="s" style="left:2064px;top:790px;opacity:0.33;" width="10" height="19" viewBox="0 0 10 19"><circle cx="4.3" cy="3.9" r="2.35" fill="#1e8bff"/><circle cx="4.3" cy="9.4" r="2.35" fill="#1e8bff"/><circle cx="4.3" cy="14.8" r="2.35" fill="#1e8bff"/></svg>
<div class="t" style="top:839.69px;font-size:17.5px;line-height:17.5px;color:#e8e8e8;left:814.90px;">Command Anomaly</div>
<div class="t" style="top:839.69px;font-size:17.5px;line-height:17.5px;color:#e8e8e8;left:1128.00px;">0</div>
<div class="t" style="top:839.69px;font-size:17.5px;line-height:17.5px;color:#e8e8e8;left:1291.00px;">7</div>
<div class="t" style="top:839.69px;font-size:17.5px;line-height:17.5px;color:#e8e8e8;left:1452.80px;">Persistent Foothold</div>
<div class="t" style="top:839.69px;font-size:17.5px;line-height:17.5px;color:#e8e8e8;left:1648.00px;">Execution</div>
<div class="r" style="left:1903px;top:834px;width:87px;height:30px;background:#1e8cff;border-radius:5px;"></div>
<svg class="s" style="left:1914px;top:841px;" width="24" height="16" viewBox="0 0 24 16"><path d="M1 8 C3.5 3 7.5 0.8 11.5 0.8 C15.5 0.8 19.5 3 22 8 C19.5 13 15.5 15.2 11.5 15.2 C7.5 15.2 3.5 13 1 8 Z" fill="#fff"/><circle cx="11.5" cy="8" r="4.6" fill="#1e8cff"/><circle cx="11.5" cy="8" r="2.6" fill="#fff"/></svg>
<div class="t" style="top:840.89px;font-size:17.5px;line-height:17.5px;color:#ffffff;left:1943.00px;">View</div>
<svg class="s" style="left:1999px;top:840px;opacity:0.33;" width="21" height="20" viewBox="0 0 21 20"><path d="M1.5 16 L1.5 19 L4.5 19 L15 8.5 L12 5.5 Z" fill="#1e8bff"/><path d="M13.2 4.3 L15.3 2.2 L18.3 5.2 L16.2 7.3 Z" fill="#1e8bff"/></svg>
<svg class="s" style="left:2029px;top:838px;opacity:0.33;" width="20" height="22" viewBox="0 0 20 22"><path d="M2.8 5.8 L3.8 18.5 Q4 19.8 5.3 19.8 H14.5 Q15.8 19.8 15.9 18.5 L16.9 5.8" fill="none" stroke="#1e8bff" stroke-width="2"/><line x1="1" y1="5" x2="19" y2="5" stroke="#1e8bff" stroke-width="2"/><path d="M6.6 4.5 V2 H13.2 V4.5" fill="none" stroke="#1e8bff" stroke-width="2"/><line x1="7.2" y1="8" x2="7.2" y2="17.8" stroke="#1e8bff" stroke-width="1.7"/><line x1="9.9" y1="8" x2="9.9" y2="17.8" stroke="#1e8bff" stroke-width="1.7"/><line x1="12.6" y1="8" x2="12.6" y2="17.8" stroke="#1e8bff" stroke-width="1.7"/></svg>
<svg class="s" style="left:2064px;top:840px;opacity:0.33;" width="10" height="19" viewBox="0 0 10 19"><circle cx="4.3" cy="3.9" r="2.35" fill="#1e8bff"/><circle cx="4.3" cy="9.4" r="2.35" fill="#1e8bff"/><circle cx="4.3" cy="14.8" r="2.35" fill="#1e8bff"/></svg>
<div class="t" style="top:889.69px;font-size:17.5px;line-height:17.5px;color:#e8e8e8;left:814.90px;">Long App Session Anomaly</div>
<div class="t" style="top:889.69px;font-size:17.5px;line-height:17.5px;color:#e8e8e8;left:1128.00px;">0</div>
<div class="t" style="top:889.69px;font-size:17.5px;line-height:17.5px;color:#e8e8e8;left:1291.00px;">1</div>
<div class="t" style="top:889.69px;font-size:17.5px;line-height:17.5px;color:#e8e8e8;left:1452.80px;">Initial Attempts</div>
<div class="t" style="top:889.69px;font-size:17.5px;line-height:17.5px;color:#e8e8e8;left:1648.00px;">External XDR NBA</div>
<div class="r" style="left:1903px;top:884px;width:87px;height:30px;background:#1e8cff;border-radius:5px;"></div>
<svg class="s" style="left:1914px;top:891px;" width="24" height="16" viewBox="0 0 24 16"><path d="M1 8 C3.5 3 7.5 0.8 11.5 0.8 C15.5 0.8 19.5 3 22 8 C19.5 13 15.5 15.2 11.5 15.2 C7.5 15.2 3.5 13 1 8 Z" fill="#fff"/><circle cx="11.5" cy="8" r="4.6" fill="#1e8cff"/><circle cx="11.5" cy="8" r="2.6" fill="#fff"/></svg>
<div class="t" style="top:890.89px;font-size:17.5px;line-height:17.5px;color:#ffffff;left:1943.00px;">View</div>
<svg class="s" style="left:1999px;top:890px;opacity:0.33;" width="21" height="20" viewBox="0 0 21 20"><path d="M1.5 16 L1.5 19 L4.5 19 L15 8.5 L12 5.5 Z" fill="#1e8bff"/><path d="M13.2 4.3 L15.3 2.2 L18.3 5.2 L16.2 7.3 Z" fill="#1e8bff"/></svg>
<svg class="s" style="left:2029px;top:888px;opacity:0.33;" width="20" height="22" viewBox="0 0 20 22"><path d="M2.8 5.8 L3.8 18.5 Q4 19.8 5.3 19.8 H14.5 Q15.8 19.8 15.9 18.5 L16.9 5.8" fill="none" stroke="#1e8bff" stroke-width="2"/><line x1="1" y1="5" x2="19" y2="5" stroke="#1e8bff" stroke-width="2"/><path d="M6.6 4.5 V2 H13.2 V4.5" fill="none" stroke="#1e8bff" stroke-width="2"/><line x1="7.2" y1="8" x2="7.2" y2="17.8" stroke="#1e8bff" stroke-width="1.7"/><line x1="9.9" y1="8" x2="9.9" y2="17.8" stroke="#1e8bff" stroke-width="1.7"/><line x1="12.6" y1="8" x2="12.6" y2="17.8" stroke="#1e8bff" stroke-width="1.7"/></svg>
<svg class="s" style="left:2064px;top:890px;opacity:0.33;" width="10" height="19" viewBox="0 0 10 19"><circle cx="4.3" cy="3.9" r="2.35" fill="#1e8bff"/><circle cx="4.3" cy="9.4" r="2.35" fill="#1e8bff"/><circle cx="4.3" cy="14.8" r="2.35" fill="#1e8bff"/></svg>
<div class="t" style="top:939.69px;font-size:17.5px;line-height:17.5px;color:#e8e8e8;left:814.90px;">Uncommon Process Anomaly</div>
<div class="t" style="top:939.69px;font-size:17.5px;line-height:17.5px;color:#e8e8e8;left:1128.00px;">0</div>
<div class="t" style="top:939.69px;font-size:17.5px;line-height:17.5px;color:#e8e8e8;left:1291.00px;">1</div>
<div class="t" style="top:939.69px;font-size:17.5px;line-height:17.5px;color:#e8e8e8;left:1452.80px;">Persistent Foothold</div>
<div class="t" style="top:939.69px;font-size:17.5px;line-height:17.5px;color:#e8e8e8;left:1648.00px;">XDR EBA</div>
<div class="r" style="left:1903px;top:934px;width:87px;height:30px;background:#1e8cff;border-radius:5px;"></div>
<svg class="s" style="left:1914px;top:941px;" width="24" height="16" viewBox="0 0 24 16"><path d="M1 8 C3.5 3 7.5 0.8 11.5 0.8 C15.5 0.8 19.5 3 22 8 C19.5 13 15.5 15.2 11.5 15.2 C7.5 15.2 3.5 13 1 8 Z" fill="#fff"/><circle cx="11.5" cy="8" r="4.6" fill="#1e8cff"/><circle cx="11.5" cy="8" r="2.6" fill="#fff"/></svg>
<div class="t" style="top:940.89px;font-size:17.5px;line-height:17.5px;color:#ffffff;left:1943.00px;">View</div>
<svg class="s" style="left:1999px;top:940px;opacity:0.33;" width="21" height="20" viewBox="0 0 21 20"><path d="M1.5 16 L1.5 19 L4.5 19 L15 8.5 L12 5.5 Z" fill="#1e8bff"/><path d="M13.2 4.3 L15.3 2.2 L18.3 5.2 L16.2 7.3 Z" fill="#1e8bff"/></svg>
<svg class="s" style="left:2029px;top:938px;opacity:0.33;" width="20" height="22" viewBox="0 0 20 22"><path d="M2.8 5.8 L3.8 18.5 Q4 19.8 5.3 19.8 H14.5 Q15.8 19.8 15.9 18.5 L16.9 5.8" fill="none" stroke="#1e8bff" stroke-width="2"/><line x1="1" y1="5" x2="19" y2="5" stroke="#1e8bff" stroke-width="2"/><path d="M6.6 4.5 V2 H13.2 V4.5" fill="none" stroke="#1e8bff" stroke-width="2"/><line x1="7.2" y1="8" x2="7.2" y2="17.8" stroke="#1e8bff" stroke-width="1.7"/><line x1="9.9" y1="8" x2="9.9" y2="17.8" stroke="#1e8bff" stroke-width="1.7"/><line x1="12.6" y1="8" x2="12.6" y2="17.8" stroke="#1e8bff" stroke-width="1.7"/></svg>
<svg class="s" style="left:2064px;top:940px;opacity:0.33;" width="10" height="19" viewBox="0 0 10 19"><circle cx="4.3" cy="3.9" r="2.35" fill="#1e8bff"/><circle cx="4.3" cy="9.4" r="2.35" fill="#1e8bff"/><circle cx="4.3" cy="14.8" r="2.35" fill="#1e8bff"/></svg>
<div class="t" style="top:989.69px;font-size:17.5px;line-height:17.5px;color:#e8e8e8;left:814.90px;">Application Usage Anomaly</div>
<div class="t" style="top:989.69px;font-size:17.5px;line-height:17.5px;color:#e8e8e8;left:1128.00px;">0</div>
<div class="t" style="top:989.69px;font-size:17.5px;line-height:17.5px;color:#e8e8e8;left:1291.00px;">1</div>
<div class="t" style="top:989.69px;font-size:17.5px;line-height:17.5px;color:#e8e8e8;left:1452.80px;">Initial Attempts</div>
<div class="t" style="top:989.69px;font-size:17.5px;line-height:17.5px;color:#e8e8e8;left:1648.00px;">External XDR NBA</div>
<div class="r" style="left:1903px;top:984px;width:87px;height:30px;background:#1e8cff;border-radius:5px;"></div>
<svg class="s" style="left:1914px;top:991px;" width="24" height="16" viewBox="0 0 24 16"><path d="M1 8 C3.5 3 7.5 0.8 11.5 0.8 C15.5 0.8 19.5 3 22 8 C19.5 13 15.5 15.2 11.5 15.2 C7.5 15.2 3.5 13 1 8 Z" fill="#fff"/><circle cx="11.5" cy="8" r="4.6" fill="#1e8cff"/><circle cx="11.5" cy="8" r="2.6" fill="#fff"/></svg>
<div class="t" style="top:990.89px;font-size:17.5px;line-height:17.5px;color:#ffffff;left:1943.00px;">View</div>
<svg class="s" style="left:1999px;top:990px;opacity:0.33;" width="21" height="20" viewBox="0 0 21 20"><path d="M1.5 16 L1.5 19 L4.5 19 L15 8.5 L12 5.5 Z" fill="#1e8bff"/><path d="M13.2 4.3 L15.3 2.2 L18.3 5.2 L16.2 7.3 Z" fill="#1e8bff"/></svg>
<svg class="s" style="left:2029px;top:988px;opacity:0.33;" width="20" height="22" viewBox="0 0 20 22"><path d="M2.8 5.8 L3.8 18.5 Q4 19.8 5.3 19.8 H14.5 Q15.8 19.8 15.9 18.5 L16.9 5.8" fill="none" stroke="#1e8bff" stroke-width="2"/><line x1="1" y1="5" x2="19" y2="5" stroke="#1e8bff" stroke-width="2"/><path d="M6.6 4.5 V2 H13.2 V4.5" fill="none" stroke="#1e8bff" stroke-width="2"/><line x1="7.2" y1="8" x2="7.2" y2="17.8" stroke="#1e8bff" stroke-width="1.7"/><line x1="9.9" y1="8" x2="9.9" y2="17.8" stroke="#1e8bff" stroke-width="1.7"/><line x1="12.6" y1="8" x2="12.6" y2="17.8" stroke="#1e8bff" stroke-width="1.7"/></svg>
<svg class="s" style="left:2064px;top:990px;opacity:0.33;" width="10" height="19" viewBox="0 0 10 19"><circle cx="4.3" cy="3.9" r="2.35" fill="#1e8bff"/><circle cx="4.3" cy="9.4" r="2.35" fill="#1e8bff"/><circle cx="4.3" cy="14.8" r="2.35" fill="#1e8bff"/></svg>
<div class="t" style="top:1039.69px;font-size:17.5px;line-height:17.5px;color:#e8e8e8;left:814.90px;">User Login Location Anomaly</div>
<div class="t" style="top:1039.69px;font-size:17.5px;line-height:17.5px;color:#e8e8e8;left:1128.00px;">0</div>
<div class="t" style="top:1039.69px;font-size:17.5px;line-height:17.5px;color:#e8e8e8;left:1291.00px;">1</div>
<div class="t" style="top:1039.69px;font-size:17.5px;line-height:17.5px;color:#e8e8e8;left:1452.80px;">Initial Attempts</div>
<div class="t" style="top:1039.69px;font-size:17.5px;line-height:17.5px;color:#e8e8e8;left:1648.00px;">External XDR UBA</div>
<div class="r" style="left:1903px;top:1034px;width:87px;height:30px;background:#1e8cff;border-radius:5px;"></div>
<svg class="s" style="left:1914px;top:1041px;" width="24" height="16" viewBox="0 0 24 16"><path d="M1 8 C3.5 3 7.5 0.8 11.5 0.8 C15.5 0.8 19.5 3 22 8 C19.5 13 15.5 15.2 11.5 15.2 C7.5 15.2 3.5 13 1 8 Z" fill="#fff"/><circle cx="11.5" cy="8" r="4.6" fill="#1e8cff"/><circle cx="11.5" cy="8" r="2.6" fill="#fff"/></svg>
<div class="t" style="top:1040.89px;font-size:17.5px;line-height:17.5px;color:#ffffff;left:1943.00px;">View</div>
<svg class="s" style="left:1999px;top:1040px;opacity:0.33;" width="21" height="20" viewBox="0 0 21 20"><path d="M1.5 16 L1.5 19 L4.5 19 L15 8.5 L12 5.5 Z" fill="#1e8bff"/><path d="M13.2 4.3 L15.3 2.2 L18.3 5.2 L16.2 7.3 Z" fill="#1e8bff"/></svg>
<svg class="s" style="left:2029px;top:1038px;opacity:0.33;" width="20" height="22" viewBox="0 0 20 22"><path d="M2.8 5.8 L3.8 18.5 Q4 19.8 5.3 19.8 H14.5 Q15.8 19.8 15.9 18.5 L16.9 5.8" fill="none" stroke="#1e8bff" stroke-width="2"/><line x1="1" y1="5" x2="19" y2="5" stroke="#1e8bff" stroke-width="2"/><path d="M6.6 4.5 V2 H13.2 V4.5" fill="none" stroke="#1e8bff" stroke-width="2"/><line x1="7.2" y1="8" x2="7.2" y2="17.8" stroke="#1e8bff" stroke-width="1.7"/><line x1="9.9" y1="8" x2="9.9" y2="17.8" stroke="#1e8bff" stroke-width="1.7"/><line x1="12.6" y1="8" x2="12.6" y2="17.8" stroke="#1e8bff" stroke-width="1.7"/></svg>
<svg class="s" style="left:2064px;top:1040px;opacity:0.33;" width="10" height="19" viewBox="0 0 10 19"><circle cx="4.3" cy="3.9" r="2.35" fill="#1e8bff"/><circle cx="4.3" cy="9.4" r="2.35" fill="#1e8bff"/><circle cx="4.3" cy="14.8" r="2.35" fill="#1e8bff"/></svg>
<div class="t" style="top:1089.69px;font-size:17.5px;line-height:17.5px;color:#e8e8e8;left:814.90px;">DeepInstinct: User Execution</div>
<div class="t" style="top:1089.69px;font-size:17.5px;line-height:17.5px;color:#e8e8e8;left:1128.00px;">0</div>
<div class="t" style="top:1089.69px;font-size:17.5px;line-height:17.5px;color:#e8e8e8;left:1291.00px;">65</div>
<div class="t" style="top:1089.69px;font-size:17.5px;line-height:17.5px;color:#e8e8e8;left:1452.80px;">Persistent Foothold</div>
<div class="t" style="top:1089.69px;font-size:17.5px;line-height:17.5px;color:#e8e8e8;left:1648.00px;">Execution</div>
<div class="r" style="left:1903px;top:1084px;width:87px;height:30px;background:#1e8cff;border-radius:5px;"></div>
<svg class="s" style="left:1914px;top:1091px;" width="24" height="16" viewBox="0 0 24 16"><path d="M1 8 C3.5 3 7.5 0.8 11.5 0.8 C15.5 0.8 19.5 3 22 8 C19.5 13 15.5 15.2 11.5 15.2 C7.5 15.2 3.5 13 1 8 Z" fill="#fff"/><circle cx="11.5" cy="8" r="4.6" fill="#1e8cff"/><circle cx="11.5" cy="8" r="2.6" fill="#fff"/></svg>
<div class="t" style="top:1090.89px;font-size:17.5px;line-height:17.5px;color:#ffffff;left:1943.00px;">View</div>
<svg class="s" style="left:1999px;top:1090px;opacity:0.33;" width="21" height="20" viewBox="0 0 21 20"><path d="M1.5 16 L1.5 19 L4.5 19 L15 8.5 L12 5.5 Z" fill="#1e8bff"/><path d="M13.2 4.3 L15.3 2.2 L18.3 5.2 L16.2 7.3 Z" fill="#1e8bff"/></svg>
<svg class="s" style="left:2029px;top:1088px;opacity:0.33;" width="20" height="22" viewBox="0 0 20 22"><path d="M2.8 5.8 L3.8 18.5 Q4 19.8 5.3 19.8 H14.5 Q15.8 19.8 15.9 18.5 L16.9 5.8" fill="none" stroke="#1e8bff" stroke-width="2"/><line x1="1" y1="5" x2="19" y2="5" stroke="#1e8bff" stroke-width="2"/><path d="M6.6 4.5 V2 H13.2 V4.5" fill="none" stroke="#1e8bff" stroke-width="2"/><line x1="7.2" y1="8" x2="7.2" y2="17.8" stroke="#1e8bff" stroke-width="1.7"/><line x1="9.9" y1="8" x2="9.9" y2="17.8" stroke="#1e8bff" stroke-width="1.7"/><line x1="12.6" y1="8" x2="12.6" y2="17.8" stroke="#1e8bff" stroke-width="1.7"/></svg>
<svg class="s" style="left:2064px;top:1090px;opacity:0.33;" width="10" height="19" viewBox="0 0 10 19"><circle cx="4.3" cy="3.9" r="2.35" fill="#1e8bff"/><circle cx="4.3" cy="9.4" r="2.35" fill="#1e8bff"/><circle cx="4.3" cy="14.8" r="2.35" fill="#1e8bff"/></svg>
<div class="t" style="top:1139.69px;font-size:17.5px;line-height:17.5px;color:#e8e8e8;left:814.90px;width:293px;overflow:hidden;">Carbon Black: XDR Endpoint Indicator</div>
<div class="t" style="top:1139.69px;font-size:17.5px;line-height:17.5px;color:#e8e8e8;left:1128.00px;">0</div>
<div class="t" style="top:1139.69px;font-size:17.5px;line-height:17.5px;color:#e8e8e8;left:1291.00px;">4</div>
<div class="t" style="top:1139.69px;font-size:17.5px;line-height:17.5px;color:#e8e8e8;left:1452.80px;">Persistent Foothold</div>
<div class="t" style="top:1139.69px;font-size:17.5px;line-height:17.5px;color:#e8e8e8;left:1648.00px;">XDR EBA</div>
<div class="r" style="left:1903px;top:1134px;width:87px;height:30px;background:#1e8cff;border-radius:5px;"></div>
<svg class="s" style="left:1914px;top:1141px;" width="24" height="16" viewBox="0 0 24 16"><path d="M1 8 C3.5 3 7.5 0.8 11.5 0.8 C15.5 0.8 19.5 3 22 8 C19.5 13 15.5 15.2 11.5 15.2 C7.5 15.2 3.5 13 1 8 Z" fill="#fff"/><circle cx="11.5" cy="8" r="4.6" fill="#1e8cff"/><circle cx="11.5" cy="8" r="2.6" fill="#fff"/></svg>
<div class="t" style="top:1140.89px;font-size:17.5px;line-height:17.5px;color:#ffffff;left:1943.00px;">View</div>
<svg class="s" style="left:1999px;top:1140px;opacity:0.33;" width="21" height="20" viewBox="0 0 21 20"><path d="M1.5 16 L1.5 19 L4.5 19 L15 8.5 L12 5.5 Z" fill="#1e8bff"/><path d="M13.2 4.3 L15.3 2.2 L18.3 5.2 L16.2 7.3 Z" fill="#1e8bff"/></svg>
<svg class="s" style="left:2029px;top:1138px;opacity:0.33;" width="20" height="22" viewBox="0 0 20 22"><path d="M2.8 5.8 L3.8 18.5 Q4 19.8 5.3 19.8 H14.5 Q15.8 19.8 15.9 18.5 L16.9 5.8" fill="none" stroke="#1e8bff" stroke-width="2"/><line x1="1" y1="5" x2="19" y2="5" stroke="#1e8bff" stroke-width="2"/><path d="M6.6 4.5 V2 H13.2 V4.5" fill="none" stroke="#1e8bff" stroke-width="2"/><line x1="7.2" y1="8" x2="7.2" y2="17.8" stroke="#1e8bff" stroke-width="1.7"/><line x1="9.9" y1="8" x2="9.9" y2="17.8" stroke="#1e8bff" stroke-width="1.7"/><line x1="12.6" y1="8" x2="12.6" y2="17.8" stroke="#1e8bff" stroke-width="1.7"/></svg>
<svg class="s" style="left:2064px;top:1140px;opacity:0.33;" width="10" height="19" viewBox="0 0 10 19"><circle cx="4.3" cy="3.9" r="2.35" fill="#1e8bff"/><circle cx="4.3" cy="9.4" r="2.35" fill="#1e8bff"/><circle cx="4.3" cy="14.8" r="2.35" fill="#1e8bff"/></svg>
<div class="r" style="left:804px;top:1175px;width:904px;height:10px;background:#606164;border-radius:5px;"></div>
<div class="r" style="left:1490px;top:1195px;width:622px;height:67px;border:3.5px solid #f7a90c;box-sizing:border-box;border-radius:12px;"></div>
<div class="t" style="top:1214.80px;font-size:15px;line-height:15px;color:#c2c2c2;left:1527.00px;">Items per page:</div>
<div class="r" style="left:1641px;top:1208px;width:70px;height:31px;border:1px solid #8c8c8c;box-sizing:border-box;border-radius:5px;"></div>
<div class="t" style="top:1214.80px;font-size:15px;line-height:15px;color:#ffffff;left:1649.60px;">10</div>
<svg class="s" style="left:1686px;top:1219px;" width="14" height="8" viewBox="0 0 14 8"><polygon points="0.5,0.5 13.5,0.5 7,7.5" fill="#bdbdbd"/></svg>
<div class="t" style="top:1216.80px;font-size:15px;line-height:15px;color:#c8c8c8;left:1756.80px;">1 – 10 of 15</div>
<svg class="s" style="left:1880px;top:1216px;" width="20" height="18" viewBox="0 0 20 18"><line x1="3" y1="2" x2="3" y2="16" stroke="#66676a" stroke-width="2.4"/><polyline points="17,2 10,9 17,16" fill="none" stroke="#66676a" stroke-width="2.4"/></svg>
<svg class="s" style="left:1922px;top:1216px;" width="16" height="18" viewBox="0 0 16 18"><polyline points="11.5,2 4.5,9 11.5,16" fill="none" stroke="#66676a" stroke-width="2.4"/></svg>
<div class="t" style="top:1216.80px;font-size:15px;line-height:15px;color:#cfcfcf;left:1951.50px;">1</div>
<div class="r" style="left:1950px;top:1239px;width:70px;height:2px;background:#b5b5b5;"></div>
<svg class="s" style="left:2032px;top:1216px;" width="16" height="18" viewBox="0 0 16 18"><polyline points="4.5,2 11.5,9 4.5,16" fill="none" stroke="#bdbdbd" stroke-width="2.4"/></svg>
<svg class="s" style="left:2069px;top:1216px;" width="22" height="18" viewBox="0 0 22 18"><polyline points="3.5,2 10.5,9 3.5,16" fill="none" stroke="#bdbdbd" stroke-width="2.4"/><line x1="17.5" y1="2" x2="17.5" y2="16" stroke="#bdbdbd" stroke-width="2.4"/></svg>
<svg class="s" style="left:0px;top:0px;z-index:5;" width="2188" height="1318" viewBox="0 0 2188 1318"><line x1="1116" y1="93.5" x2="1004.9" y2="163.2" stroke="#f7a90c" stroke-width="10" stroke-linecap="round"/><polygon points="982.0,177.5 998.3,149.0 1014.8,175.2" fill="#f7a90c"/><line x1="1384.0" y1="189.0" x2="1441.6" y2="189.0" stroke="#f7a90c" stroke-width="10" stroke-linecap="round"/><polygon points="1468.6,189.0 1439.6,204.5 1439.6,173.5" fill="#f7a90c"/><line x1="291" y1="266.3" x2="350.0" y2="224.6" stroke="#f7a90c" stroke-width="10" stroke-linecap="round"/><polygon points="372.0,209.0 357.3,238.4 339.4,213.1" fill="#f7a90c"/><line x1="259.0" y1="596.0" x2="330.4" y2="596.0" stroke="#f7a90c" stroke-width="10" stroke-linecap="round"/><polygon points="357.4,596.0 328.4,611.5 328.4,580.5" fill="#f7a90c"/><line x1="1016.5" y1="509" x2="846.0" y2="569.9" stroke="#f7a90c" stroke-width="10" stroke-linecap="round"/><polygon points="820.6,579.0 842.7,554.6 853.1,583.8" fill="#f7a90c"/><line x1="1469.6" y1="549.4" x2="1469.6" y2="587.2" stroke="#f7a90c" stroke-width="10" stroke-linecap="round"/><polygon points="1469.6,614.2 1454.1,585.2 1485.1,585.2" fill="#f7a90c"/><line x1="1290.0" y1="1228.7" x2="1451.5" y2="1228.7" stroke="#f7a90c" stroke-width="10" stroke-linecap="round"/><polygon points="1478.5,1228.7 1449.5,1244.2 1449.5,1213.2" fill="#f7a90c"/></svg>
<div class="t" style="top:51.26px;font-size:16px;line-height:16px;color:#f7a90c;font-weight:700;left:733.50px;width:1000px;text-align:center;z-index:6;">Search all pages of the</div>
<div class="t" style="top:70.46px;font-size:16px;line-height:16px;color:#f7a90c;font-weight:700;left:733.50px;width:1000px;text-align:center;z-index:6;">table using Lucene syntax.</div>
<div class="t" style="top:174.16px;font-size:16px;line-height:16px;color:#f7a90c;font-weight:700;left:780.30px;width:1000px;text-align:center;z-index:6;">Time filters specify the</div>
<div class="t" style="top:193.36px;font-size:16px;line-height:16px;color:#f7a90c;font-weight:700;left:780.30px;width:1000px;text-align:center;z-index:6;">interval for the table.</div>
<div class="t" style="top:277.33px;font-size:15.8px;line-height:15.8px;color:#f7a90c;font-weight:700;left:-271.00px;width:1000px;text-align:center;z-index:6;">Click this button to toggle</div>
<div class="t" style="top:296.03px;font-size:15.8px;line-height:15.8px;color:#f7a90c;font-weight:700;left:-271.00px;width:1000px;text-align:center;z-index:6;">the Filters panel between</div>
<div class="t" style="top:315.03px;font-size:15.8px;line-height:15.8px;color:#f7a90c;font-weight:700;left:-271.00px;width:1000px;text-align:center;z-index:6;">open and closed.</div>
<div class="t" style="top:561.36px;font-size:16px;line-height:16px;color:#f7a90c;font-weight:700;left:-372.00px;width:1000px;text-align:center;z-index:6;">Use display filters to focus on</div>
<div class="t" style="top:580.26px;font-size:16px;line-height:16px;color:#f7a90c;font-weight:700;left:-372.00px;width:1000px;text-align:center;z-index:6;">just the data that interest you.</div>
<div class="t" style="top:599.06px;font-size:16px;line-height:16px;color:#f7a90c;font-weight:700;left:-372.00px;width:1000px;text-align:center;z-index:6;">The available filters depend on</div>
<div class="t" style="top:618.06px;font-size:16px;line-height:16px;color:#f7a90c;font-weight:700;left:-372.00px;width:1000px;text-align:center;z-index:6;">the type of table you're using.</div>
<div class="t" style="top:478.66px;font-size:16px;line-height:16px;color:#f7a90c;font-weight:700;left:618.50px;width:1000px;text-align:center;z-index:6;">Collapsible Column Picker</div>
<div class="t" style="top:497.36px;font-size:16px;line-height:16px;color:#f7a90c;font-weight:700;left:618.50px;width:1000px;text-align:center;z-index:6;">lets you choose the</div>
<div class="t" style="top:516.06px;font-size:16px;line-height:16px;color:#f7a90c;font-weight:700;left:618.50px;width:1000px;text-align:center;z-index:6;">columns for the table</div>
<div class="t" style="top:497.36px;font-size:16px;line-height:16px;color:#f7a90c;font-weight:700;left:969.50px;width:1000px;text-align:center;z-index:6;">Columns can be sorted, pinned,</div>
<div class="t" style="top:515.66px;font-size:16px;line-height:16px;color:#f7a90c;font-weight:700;left:969.50px;width:1000px;text-align:center;z-index:6;">autosized, or reset.</div>
<div class="t" style="top:1212.96px;font-size:16px;line-height:16px;color:#f7a90c;font-weight:700;left:582.30px;width:1000px;text-align:center;z-index:6;">Choose the number of items per page and</div>
<div class="t" style="top:1231.76px;font-size:16px;line-height:16px;color:#f7a90c;font-weight:700;left:582.30px;width:1000px;text-align:center;z-index:6;">scroll through pages of data.</div>
</body></html>
